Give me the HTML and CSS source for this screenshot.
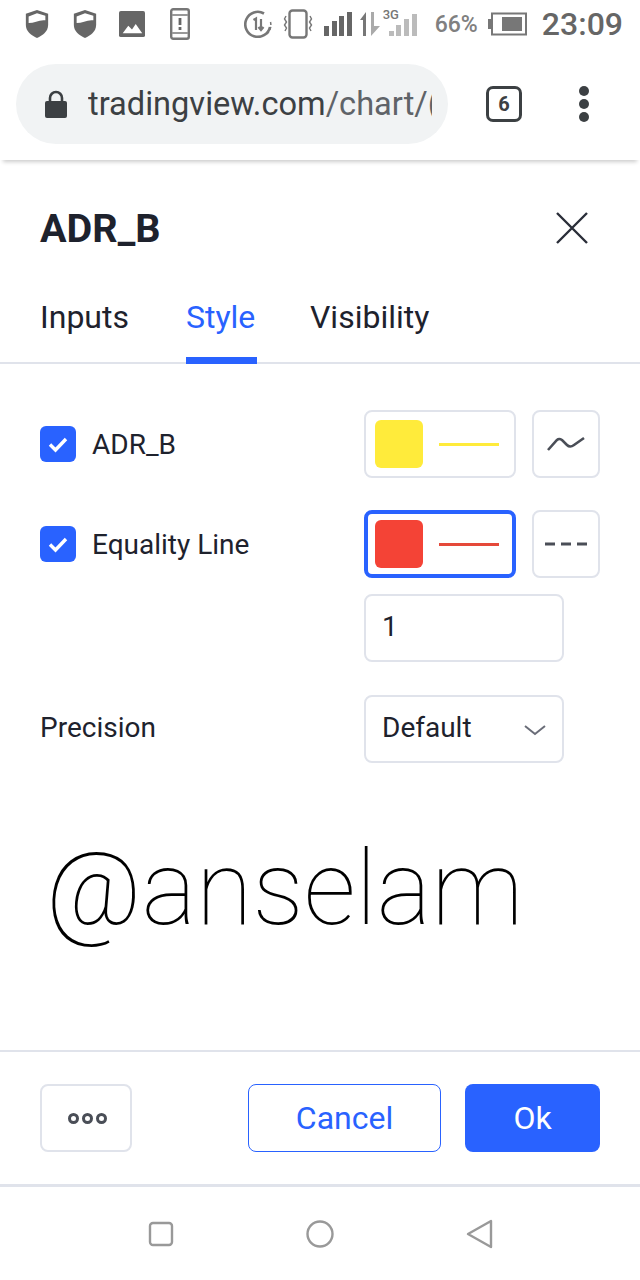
FILE: index.html
```html
<!DOCTYPE html>
<html lang="en">

<head>
	<meta charset="UTF-8">
	<meta name="viewport" content="width=device-width, initial-scale=1.0">
	<title>ADR_B</title>
	<link rel="stylesheet" href="styles.css">
</head>

<body>
	<div class="statusbar">
		<div class="status-left">
			<svg class="shield" width="26" height="30" viewBox="0 0 28 32"><path d="M14 1 L26 5 V17 C26 24 20 28 14 31 C8 28 2 24 2 17 V5 Z" fill="#666"/><path d="M5 8 L14 4.5 L23 7 V12 C17 11 11 15 5 15 Z" fill="#fff"/></svg>
			<svg class="shield" width="26" height="30" viewBox="0 0 28 32"><path d="M14 1 L26 5 V17 C26 24 20 28 14 31 C8 28 2 24 2 17 V5 Z" fill="#666"/><path d="M5 8 L14 4.5 L23 7 V12 C17 11 11 15 5 15 Z" fill="#fff"/></svg>
			<svg class="photo" width="26" height="26" viewBox="0 0 28 28"><rect x="0" y="0" width="28" height="28" rx="2" fill="#666"/><path d="M4 24 L10 16 L14 20 L18 14 L25 24 Z" fill="#fff"/></svg>
			<svg class="phone" width="20" height="32" viewBox="0 0 20 32"><rect x="1.2" y="1.2" width="17.6" height="29.6" rx="2" fill="#fff" stroke="#777" stroke-width="2.4"/><rect x="2" y="6" width="16" height="2" fill="#999"/><rect x="2" y="24" width="16" height="2" fill="#999"/><rect x="8.6" y="10" width="2.8" height="7" fill="#666"/><rect x="8.6" y="19" width="2.8" height="3" fill="#666"/></svg>
		</div>
		<div class="status-right">
			<svg width="28" height="28" viewBox="0 0 28 28"><path d="M20 3.5 A12.5 12.5 0 1 0 26 17" fill="none" stroke="#777" stroke-width="2.6"/><path d="M23 24 A12.5 12.5 0 0 0 26.5 12" fill="none" stroke="#777" stroke-width="1.5" stroke-dasharray="3 2"/><path d="M9.5 10 L12 8.5 V20 M17 9 V20 M14.5 17 L17 20 L19.5 17" fill="none" stroke="#777" stroke-width="2.2"/></svg>
			<svg class="vib" width="30" height="30" viewBox="0 0 30 30"><rect x="6.5" y="1.5" width="17" height="27" rx="3" fill="none" stroke="#777" stroke-width="2.4"/><path d="M3 7 L1.5 10 L3.5 13 L1.5 16 L3.5 19 L2 22 M27 7 L28.5 10 L26.5 13 L28.5 16 L26.5 19 L28 22" fill="none" stroke="#777" stroke-width="1.4"/></svg>
			<svg class="signal" width="95" height="26" viewBox="0 0 95 26"><rect x="0" y="15" width="5" height="10" fill="#666"/><rect x="8" y="10" width="5" height="15" fill="#666"/><rect x="15" y="5" width="5" height="20" fill="#666"/><rect x="23" y="1" width="5" height="24" fill="#666"/><path d="M36 9 L42 1 V25 H39 V9 Z" fill="#777"/><path d="M47 1 H50 V15 L56 15 L47 25 Z" fill="#aaa"/><rect x="65" y="20" width="5" height="5" fill="#bbb"/><rect x="72" y="14" width="5" height="11" fill="#bbb"/><rect x="80" y="8" width="5" height="17" fill="#bbb"/><rect x="88" y="3" width="5" height="22" fill="#bbb"/></svg>
			<span class="net">3G</span>
			<span class="batt-pct">66%</span>
			<svg class="batt" width="39" height="24" viewBox="0 0 39 24"><rect x="0" y="7" width="3" height="10" fill="#777"/><rect x="4" y="1.5" width="34" height="21" fill="none" stroke="#777" stroke-width="2"/><rect x="14" y="5" width="20" height="14" fill="#777"/></svg>
			<span class="clock">23:09</span>
		</div>
	</div>

	<div class="toolbar">
		<div class="omnibox">
			<svg width="22" height="28" viewBox="0 0 22 28"><path d="M5 12 V8 a6 6 0 0 1 12 0 V12" fill="none" stroke="#3c4043" stroke-width="2.6"/><rect x="0" y="11" width="22" height="17" rx="2" fill="#3c4043"/></svg>
			<span class="url">tradingview.com<span class="url-path">/chart/(</span></span>
		</div>
		<div class="tabs-count">6</div>
		<div class="kebab"><i></i><i></i><i></i></div>
	</div>

	<div class="dialog">
		<div class="dialog-head">
			<span class="dialog-title">ADR_B</span>
			<svg width="36" height="36" viewBox="0 0 36 36"><path d="M3 3 L33 33 M33 3 L3 33" stroke="#2a2e39" stroke-width="2.4" fill="none"/></svg>
		</div>

		<div class="tabs">
			<div class="tab">Inputs</div>
			<div class="tab active">Style</div>
			<div class="tab">Visibility</div>
		</div>

		<div class="rows">
			<div class="row">
				<div class="check-label">
					<span class="check"><svg width="36" height="36" viewBox="0 0 36 36"><path d="M10 18.5 L15.5 24 L26 13" fill="none" stroke="#fff" stroke-width="3.4"/></svg></span>
					ADR_B
				</div>
				<div class="controls">
					<div class="color-btn">
						<span class="swatch yellow"></span><span class="swatch-line yellow"></span>
					</div>
					<div class="square-btn">
						<svg width="38" height="16" viewBox="0 0 38 16"><path d="M1 14 L10 4 Q12 2 15 4 L20 9 Q23 12 27 9 L37 2" fill="none" stroke="#4a4e57" stroke-width="2.6"/></svg>
					</div>
				</div>
			</div>
			<div class="row">
				<div class="check-label">
					<span class="check"><svg width="36" height="36" viewBox="0 0 36 36"><path d="M10 18.5 L15.5 24 L26 13" fill="none" stroke="#fff" stroke-width="3.4"/></svg></span>
					Equality Line
				</div>
				<div class="controls">
					<div class="color-btn focused">
						<span class="swatch red"></span><span class="swatch-line red"></span>
					</div>
					<div class="square-btn">
						<svg width="44" height="4" viewBox="0 0 44 4"><path d="M1 2 H11 M17 2 H27 M33 2 H43" stroke="#4a4e57" stroke-width="3" fill="none"/></svg>
					</div>
				</div>
			</div>
			<div class="row row-tight">
				<div></div>
				<div class="field">1</div>
			</div>
			<div class="row row-precision">
				<div class="plain-label">Precision</div>
				<div class="field select">
					Default
					<svg width="22" height="12" viewBox="0 0 22 12"><path d="M1 2 L11 10 L21 2" fill="none" stroke="#6a6d78" stroke-width="2"/></svg>
				</div>
			</div>
		</div>

		<div class="signature">@anselam</div>

		<div class="dialog-foot">
			<div class="more-btn"><i></i><i></i><i></i></div>
			<div class="foot-actions">
				<div class="btn cancel">Cancel</div>
				<div class="btn ok">Ok</div>
			</div>
		</div>
	</div>

	<div class="navbar">
		<svg width="26" height="26" viewBox="0 0 26 26"><rect x="2" y="2" width="22" height="22" rx="3" fill="none" stroke="#999" stroke-width="2.4"/></svg>
		<svg width="28" height="28" viewBox="0 0 28 28"><circle cx="14" cy="14" r="12.5" fill="none" stroke="#999" stroke-width="2.4"/></svg>
		<svg width="28" height="30" viewBox="0 0 28 30"><path d="M25 2 V28 L2 15 Z" fill="none" stroke="#999" stroke-width="2.4" stroke-linejoin="round"/></svg>
	</div>
</body>

</html>
```

FILE: styles.css
```css
* {
	box-sizing: border-box;
}

body {
	margin: 0;
	width: 640px;
	height: 1280px;
	overflow: hidden;
	background: #fff;
	font-family: Roboto, sans-serif;
	color: #1e222d;
}

svg {
	display: block;
	flex: none;
}

/* status bar */
.statusbar {
	height: 52px;
	padding: 0 17px 4px 24px;
	display: flex;
	justify-content: space-between;
	align-items: center;
}

.status-left {
	display: flex;
	align-items: center;
}

.shield {
	margin-right: 22px;
}

.photo {
	margin: 0 25px 0 -1px;
}

.status-right {
	position: relative;
	display: flex;
	align-items: center;
}

.vib {
	margin-left: 11px;
}

.signal {
	margin-left: 11px;
}

.net {
	position: absolute;
	left: 139px;
	top: 2px;
	font-size: 13px;
	font-weight: 500;
	color: #777;
}

.batt-pct {
	font-size: 23px;
	font-weight: 500;
	color: #808080;
	margin-left: 16px;
}

.batt {
	margin-left: 10px;
}

.clock {
	font-size: 32px;
	font-weight: 500;
	color: #666;
	margin-left: 15px;
}

/* browser toolbar */
.toolbar {
	height: 108px;
	padding: 12px 0 16px 16px;
	display: flex;
	align-items: center;
	box-shadow: 0 5px 4px -3px rgba(0, 0, 0, 0.2);
	position: relative;
}

.omnibox {
	width: 432px;
	height: 80px;
	border-radius: 40px;
	background: #f1f3f4;
	padding: 0 16px 0 29px;
	display: flex;
	align-items: center;
	gap: 21px;
	overflow: hidden;
}

.url {
	font-size: 32.6px;
	color: #3c4043;
	white-space: nowrap;
	overflow: hidden;
}

.url-path {
	color: #5f6368;
}

.tabs-count {
	width: 36px;
	height: 36px;
	margin-left: 38px;
	border: 3.5px solid #3c4043;
	border-radius: 7px;
	font-size: 20px;
	font-weight: 700;
	color: #3c4043;
	display: flex;
	align-items: center;
	justify-content: center;
}

.kebab {
	margin-left: 57px;
	display: flex;
	flex-direction: column;
	gap: 3px;
}

.kebab i {
	width: 10px;
	height: 10px;
	border-radius: 50%;
	background: #3c4043;
}

/* dialog */
.dialog-head {
	height: 136px;
	padding: 0 50px 0 40px;
	display: flex;
	justify-content: space-between;
	align-items: center;
}

.dialog-title {
	font-size: 39.6px;
	font-weight: 700;
}

.tabs {
	height: 69px;
	margin-top: -1px;
	padding-left: 40px;
	display: flex;
	gap: 57px;
	border-bottom: 2px solid #e0e3eb;
}

.tab {
	height: 69px;
	padding-top: 2px;
	font-size: 32px;
	line-height: 40px;
}

.tab.active {
	width: 71px;
	margin-right: -4px;
	color: #2962ff;
	border-bottom: 7px solid #2962ff;
}

.rows {
	padding: 46px 40px 0;
}

.row {
	height: 68px;
	margin-bottom: 32px;
	display: flex;
	justify-content: space-between;
	align-items: center;
}

.row-tight {
	margin-top: -16px;
	margin-bottom: 33px;
}

.row-precision {
	margin-bottom: 0;
}

.check-label {
	display: flex;
	align-items: center;
	gap: 16px;
	font-size: 28px;
}

.check {
	width: 36px;
	height: 36px;
	border-radius: 6px;
	background: #2962ff;
}

.plain-label {
	font-size: 28px;
	margin-top: -4px;
}

.controls {
	width: 236px;
	display: flex;
	justify-content: space-between;
}

.color-btn {
	width: 152px;
	height: 68px;
	border: 2px solid #e0e3eb;
	border-radius: 8px;
	padding-left: 9px;
	display: flex;
	align-items: center;
	gap: 16px;
}

.color-btn.focused {
	border: 4px solid #2962ff;
	padding-left: 7px;
}

.swatch {
	width: 48px;
	height: 48px;
	border-radius: 6px;
}

.swatch.yellow {
	background: #ffeb3b;
}

.swatch.red {
	background: #f44336;
}

.swatch-line {
	width: 60px;
	height: 3px;
}

.swatch-line.yellow {
	background: #ffeb3b;
}

.swatch-line.red {
	background: #e5493a;
}

.square-btn {
	width: 68px;
	height: 68px;
	border: 2px solid #e0e3eb;
	border-radius: 8px;
	display: flex;
	align-items: center;
	justify-content: center;
}

.field {
	width: 200px;
	height: 68px;
	margin-right: 36px;
	border: 2px solid #e0e3eb;
	border-radius: 8px;
	padding: 0 16px 3px;
	font-size: 28px;
	display: flex;
	align-items: center;
	justify-content: space-between;
}

.select svg {
	margin-top: 5px;
}

.signature {
	margin-top: 55px;
	padding-left: 46px;
	height: 142px;
	font-size: 103px;
	font-weight: 100;
	line-height: 142px;
	color: #000;
	white-space: nowrap;
}

.dialog-foot {
	margin-top: 90px;
	height: 137px;
	border-top: 2px solid #e0e3eb;
	border-bottom: 3px solid #e0e3eb;
	padding: 0 40px;
	display: flex;
	justify-content: space-between;
	align-items: center;
}

.more-btn {
	width: 92px;
	height: 68px;
	border: 2px solid #e0e3eb;
	border-radius: 8px;
	padding-left: 2px;
	display: flex;
	align-items: center;
	justify-content: center;
	gap: 3px;
}

.more-btn i {
	width: 11px;
	height: 11px;
	border: 3px solid #4a4e57;
	border-radius: 50%;
}

.foot-actions {
	display: flex;
	gap: 24px;
}

.btn {
	height: 68px;
	border-radius: 8px;
	font-size: 32px;
	display: flex;
	align-items: center;
	justify-content: center;
}

.cancel {
	width: 193px;
	border: 1.5px solid #2962ff;
	color: #2962ff;
}

.ok {
	width: 135px;
	background: #2962ff;
	color: #fff;
}

/* android nav */
.navbar {
	height: 93px;
	padding: 0 146px 0 148px;
	display: flex;
	justify-content: space-between;
	align-items: center;
}
```
